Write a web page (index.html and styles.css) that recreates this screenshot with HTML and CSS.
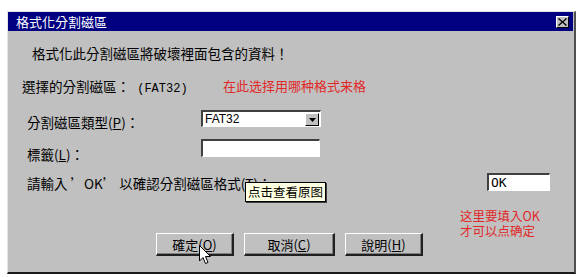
FILE: index.html
```html
<!DOCTYPE html>
<html lang="zh-Hant">
<head>
<meta charset="utf-8">
<title>格式化分割磁區</title>
<link rel="stylesheet" href="styles.css">
</head>
<body>
<div class="dialog">
  <div class="titlebar">
    <span class="title">格式化分割磁區</span>
    <span class="close"><svg width="9" height="8" viewBox="0 0 9 8"><path d="M1 0 L4.5 3.2 L8 0 L9 0.9 L5.5 4 L9 7.1 L8 8 L4.5 4.8 L1 8 L0 7.1 L3.5 4 L0 0.9 Z" fill="#000"/></svg></span>
  </div>
  <div class="content">
    <div class="row warn">格式化此分割磁區將破壞裡面包含的資料！</div>
    <div class="row sel">
      <span class="sel-label">選擇的分割磁區：<span class="latin"> (FAT32)</span></span>
      <span class="red">在此选择用哪种格式来格</span>
    </div>
    <div class="row field">
      <span class="flabel">分割磁區類型(<u>P</u>)：</span>
      <div class="combo">
        <span class="combo-text">FAT32</span>
        <span class="combo-btn"><svg width="7" height="4" viewBox="0 0 7 4"><path d="M0 0 H7 L3.5 4 Z" fill="#000"/></svg></span>
      </div>
    </div>
    <div class="row field field2">
      <span class="flabel">標籤(<u>L</u>)：</span>
      <div class="textbox"></div>
    </div>
    <div class="row confirm">
      <span class="clabel">請輸入 ’OK’ 以確認分割磁區格式(<u>T</u>)：</span>
      <div class="okbox">OK</div>
    </div>
    <div class="row bottom">
      <div class="buttons">
        <button class="btn b1">確定(<u>O</u>)</button>
        <button class="btn b2">取消(<u>C</u>)</button>
        <button class="btn b3">說明(<u>H</u>)</button>
      </div>
      <div class="notes red">这里要填入OK<br>才可以点确定</div>
    </div>
  </div>
  <div class="tooltip">点击查看原图</div>
  <svg class="cursor" width="13" height="20" viewBox="0 0 13 20"><path d="M0.5 0.5 V16 L4 12.5 L6.5 18.5 L9 17.5 L6.5 11.5 H11.5 Z" fill="#fff" stroke="#000" stroke-width="1"/></svg>
</div>
</body>
</html>
```
FILE: styles.css
```css
html, body { margin: 0; padding: 0; background: #fff; }
body {
  font-family: "Noto Sans CJK TC", "Noto Sans CJK SC", sans-serif;
  font-size: 13.5px;
  color: #000;
}
.dialog {
  position: relative;
  margin: 11px 0 0 7px;
  width: 566px;
  height: 260px;
  background: #c0c0c0;
  border-top: 1px solid #e4e4e4;
  border-left: 1px solid #e4e4e4;
  border-right: 2px solid #505050;
  border-bottom: 2px solid #1a1a1a;
}
.titlebar {
  height: 19px;
  margin-right: 1px;
  background: #000080;
  color: #fff;
  display: flex;
  align-items: center;
  justify-content: space-between;
  padding: 0 4px 0 8px;
}
.title { font-size: 13px; line-height: 19px; }
.close {
  width: 11px;
  height: 10px;
  background: #c0c0c0;
  border-top: 1px solid #fff;
  border-left: 1px solid #fff;
  border-right: 1px solid #000;
  border-bottom: 1px solid #000;
  display: flex;
  align-items: center;
  justify-content: center;
}
.content { display: flex; flex-direction: column; }
.row { display: flex; line-height: 18px; }
.warn { margin-top: 13px; padding-left: 24px; }
.sel { margin-top: 15px; padding-left: 14px; }
.sel-label { width: 201px; white-space: pre; }
.latin { font-family: "Liberation Mono", monospace; font-size: 12px; }
.red { color: #e02828; font-family: "Noto Sans CJK SC", sans-serif; font-size: 13px; }
.field { margin-top: 12px; padding-left: 19px; align-items: flex-start; }
.flabel { width: 174px; margin-top: 3px; }
.combo {
  width: 114px;
  height: 13px;
  background: #fff;
  border-top: 2px solid #404040;
  border-left: 2px solid #404040;
  border-right: 1px solid #fff;
  border-bottom: 1px solid #fff;
  display: flex;
  justify-content: space-between;
  padding: 1px 1px 0 2px;
}
.combo-text { font-family: "Liberation Sans", sans-serif; font-size: 12px; line-height: 13px; }
.combo-btn {
  width: 12px;
  height: 11px;
  background: #c0c0c0;
  border-top: 1px solid #fff;
  border-left: 1px solid #fff;
  border-right: 1px solid #000;
  border-bottom: 1px solid #000;
  display: flex;
  align-items: center;
  justify-content: center;
}
.field2 { margin-top: 8px; }
.field2 .flabel { margin-top: 6px; }
.textbox {
  width: 116px;
  height: 15px;
  background: #fff;
  border-top: 2px solid #404040;
  border-left: 2px solid #404040;
  border-right: 1px solid #fff;
  border-bottom: 1px solid #fff;
}
.confirm { margin-top: 10px; padding-left: 19px; align-items: flex-start; }
.clabel { width: 460px; margin-top: 1px; }
.okbox {
  width: 58px;
  height: 15px;
  background: #fff;
  border-top: 2px solid #404040;
  border-left: 2px solid #404040;
  border-right: 1px solid #fff;
  border-bottom: 1px solid #fff;
  padding-left: 2px;
  font-family: "DejaVu Sans Mono", monospace;
  font-size: 13px;
  line-height: 15px;
}
.bottom { margin-top: 16px; padding-left: 148px; align-items: flex-start; }
.buttons { display: flex; gap: 10px; margin-top: 25px; }
.btn {
  height: 23px;
  padding: 0;
  margin: 0;
  background: #c0c0c0;
  font-family: "Noto Sans CJK TC", sans-serif;
  font-size: 13px;
  color: #000;
  border-top: 1px solid #fff;
  border-left: 1px solid #fff;
  border-right: 2px solid #202020;
  border-bottom: 2px solid #202020;
  box-shadow: inset -1px -1px 0 #808080;
  line-height: 19px;
}
.b1 { width: 78px; }
.b2 { width: 91px; }
.b3 { width: 78px; }
.notes { margin-left: 37px; font-size: 12.5px; line-height: 15px; }
.tooltip {
  position: absolute;
  left: 237px;
  top: 170px;
  height: 18px;
  padding: 0 2px;
  background: #ffffe1;
  border: 1px solid #000;
  box-shadow: 1px 1px 0 #404040;
  font-family: "Noto Sans CJK SC", sans-serif;
  font-size: 12.5px;
  line-height: 18px;
  white-space: nowrap;
}
.cursor { position: absolute; left: 191px; top: 233px; }
```
